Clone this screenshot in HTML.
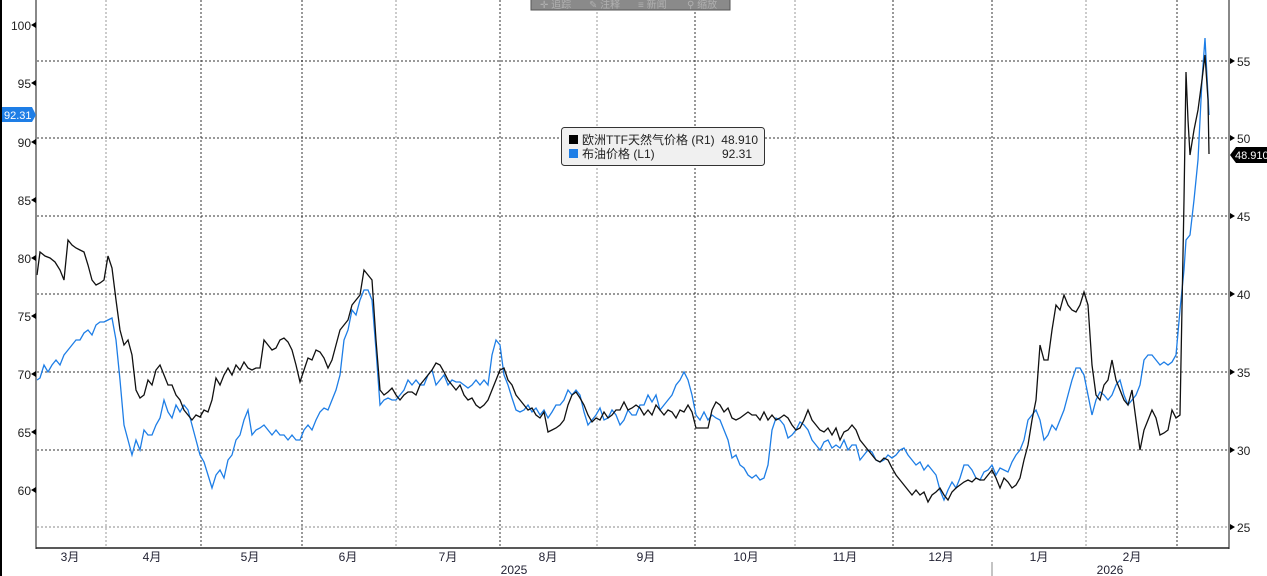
<!DOCTYPE html>
<html><head><meta charset="utf-8"><style>
html,body{margin:0;padding:0;background:#fff;width:1267px;height:576px;overflow:hidden}
svg{display:block;font-family:"Liberation Sans","Noto Sans CJK SC",sans-serif}
</style></head><body>
<svg width="1267" height="576" viewBox="0 0 1267 576">
<rect x="0" y="0" width="1267" height="576" fill="#fff"/>
<rect x="0" y="0" width="2" height="576" fill="#000"/>
<g stroke="#333" stroke-width="1" stroke-dasharray="2,2">
<line x1="37" y1="61" x2="1228" y2="61"/><line x1="37" y1="138" x2="1228" y2="138"/>
<line x1="37" y1="216" x2="1228" y2="216"/><line x1="37" y1="294" x2="1228" y2="294"/>
<line x1="37" y1="372" x2="1228" y2="372"/><line x1="37" y1="450" x2="1228" y2="450"/>
<line x1="37" y1="527" x2="1228" y2="527" stroke="#888"/>
</g>
<g stroke="#999" stroke-width="1" stroke-dasharray="2,2">
<line x1="106" y1="0" x2="106" y2="548"/><line x1="201" y1="0" x2="201" y2="548" stroke="#333"/>
<line x1="302" y1="0" x2="302" y2="548" stroke="#333"/><line x1="396" y1="0" x2="396" y2="548"/>
<line x1="500" y1="0" x2="500" y2="548" stroke="#333"/><line x1="597" y1="0" x2="597" y2="548"/>
<line x1="695" y1="0" x2="695" y2="548" stroke="#333"/><line x1="795" y1="0" x2="795" y2="548"/>
<line x1="893" y1="0" x2="893" y2="548" stroke="#333"/><line x1="992" y1="0" x2="992" y2="548" stroke="#333"/>
<line x1="1086" y1="0" x2="1086" y2="548"/><line x1="1177" y1="0" x2="1177" y2="548" stroke="#333"/>
</g>
<line x1="36" y1="0" x2="36" y2="549" stroke="#888" stroke-width="2"/>
<line x1="1229" y1="0" x2="1229" y2="549" stroke="#888" stroke-width="2"/>
<line x1="36" y1="548" x2="1229" y2="548" stroke="#222" stroke-width="1.5"/>
<line x1="992" y1="562" x2="992" y2="576" stroke="#888"/>
<g font-size="12" fill="#222" text-anchor="end">
<text x="31" y="30">100</text><text x="31" y="88">95</text><text x="31" y="147">90</text>
<text x="31" y="205">85</text><text x="31" y="263">80</text><text x="31" y="321">75</text>
<text x="31" y="379">70</text><text x="31" y="437">65</text><text x="31" y="495">60</text>
</g>
<g font-size="12" fill="#222">
<text x="1237" y="66">55</text><text x="1237" y="143">50</text><text x="1237" y="221">45</text>
<text x="1237" y="299">40</text><text x="1237" y="377">35</text><text x="1237" y="455">30</text>
<text x="1237" y="532">25</text>
</g>
<g font-size="12" fill="#223" text-anchor="middle">
<text x="70" y="561">3月</text><text x="152" y="561">4月</text><text x="250" y="561">5月</text>
<text x="348" y="561">6月</text><text x="448" y="561">7月</text><text x="548" y="561">8月</text>
<text x="646" y="561">9月</text><text x="746" y="561">10月</text><text x="845" y="561">11月</text>
<text x="941" y="561">12月</text><text x="1039" y="561">1月</text><text x="1132" y="561">2月</text>
<text x="514" y="574">2025</text><text x="1110" y="574">2026</text>
</g>
<polyline fill="none" stroke="#1e7ee6" stroke-width="1.3" points="37,380 40,378 44,365 48,372 52,365 56,360 60,365 64,355 68,350 72,345 76,340 80,340 84,333 88,330 92,335 96,325 100,322 104,322 108,320 112,318 116,340 120,380 124,425 128,440 132,455 136,440 140,450 144,430 148,435 152,435 156,425 160,418 164,400 168,412 172,418 176,405 180,412 184,405 188,410 192,425 196,440 200,455 204,462 208,475 212,488 216,475 220,470 224,478 228,460 232,455 236,440 240,435 244,420 248,410 252,435 256,430 260,428 264,425 268,430 272,435 276,430 280,435 284,435 288,440 292,435 296,440 300,440 304,430 308,425 312,430 316,420 320,412 324,408 328,410 332,400 336,390 340,375 344,340 348,330 352,310 356,315 360,300 364,290 368,290 372,300 376,350 380,405 384,400 388,398 392,400 396,400 400,395 404,390 408,380 412,385 416,380 420,385 424,385 428,375 432,370 436,385 440,380 444,375 448,385 452,380 456,382 460,382 464,385 468,388 472,385 476,380 480,385 484,380 488,385 492,355 496,340 500,345 504,375 508,385 512,398 516,410 520,412 524,410 528,405 532,412 536,408 540,415 544,410 548,418 552,412 556,405 560,405 564,400 568,390 572,395 576,390 580,395 584,412 588,425 592,420 596,415 600,408 604,420 608,418 612,410 616,415 620,425 624,420 628,410 632,415 636,415 640,405 644,405 648,395 652,402 656,395 660,410 664,405 668,400 672,395 676,385 680,380 684,372 688,380 692,395 696,415 700,420 704,412 708,420 712,415 716,418 720,420 724,430 728,440 732,458 736,455 740,465 744,468 748,475 752,478 756,475 760,480 764,478 768,465 772,430 776,418 780,420 784,425 788,438 792,435 796,430 800,422 804,425 808,430 812,440 816,445 820,450 824,442 828,440 832,448 836,445 840,448 844,440 848,450 852,445 856,445 860,460 864,455 868,450 872,452 876,460 880,462 884,460 888,455 892,458 896,455 900,450 904,448 908,455 912,460 916,465 920,462 924,470 928,465 932,470 936,475 940,490 944,500 948,490 952,482 956,488 960,478 964,465 968,465 972,470 976,478 980,480 984,472 988,470 992,465 996,475 1000,468 1004,470 1008,472 1012,462 1016,455 1020,450 1024,440 1028,420 1032,415 1036,410 1040,420 1044,440 1048,435 1052,425 1056,430 1060,420 1064,410 1068,395 1072,380 1076,368 1080,368 1084,375 1088,395 1092,415 1096,400 1100,392 1104,395 1108,400 1112,395 1116,385 1120,380 1124,395 1128,405 1132,400 1136,395 1140,385 1144,360 1148,355 1152,355 1156,360 1160,365 1164,362 1168,365 1172,362 1176,355 1180,310 1184,270 1186,240 1190,235 1194,200 1198,160 1202,80 1205,38 1209,115"/>
<polyline fill="none" stroke="#111" stroke-width="1.3" points="37,275 40,252 45,256 50,258 55,262 60,270 64,280 68,240 72,245 76,248 80,250 84,252 88,265 92,280 96,285 100,283 104,280 108,256 112,268 116,300 120,330 124,345 128,340 132,355 136,390 140,398 144,395 148,380 152,385 156,370 160,365 164,375 168,385 172,385 176,395 180,400 184,410 188,415 192,420 196,415 200,417 204,410 208,412 212,400 216,378 220,385 224,375 228,368 232,375 236,365 240,370 244,362 248,368 252,370 256,368 260,368 264,340 268,345 272,350 276,348 280,340 284,338 288,342 292,350 296,365 300,382 304,370 308,358 312,360 316,350 320,352 324,358 328,368 332,360 336,345 340,330 344,325 348,320 352,305 356,300 360,295 364,270 368,275 372,280 376,340 380,390 384,395 388,392 392,388 396,395 400,400 404,395 408,392 412,392 416,395 420,385 424,380 428,375 432,370 436,363 440,365 444,372 448,380 452,385 456,390 460,385 464,395 468,400 472,398 476,405 480,408 484,405 488,400 492,390 496,380 500,370 504,368 508,380 512,385 516,395 520,400 524,405 528,410 532,408 536,415 540,418 544,412 548,432 552,430 556,428 560,425 564,420 568,405 572,395 576,392 580,398 584,405 588,415 592,422 596,418 600,420 604,412 608,418 612,415 616,410 620,410 624,402 628,410 632,408 636,405 640,408 644,415 648,410 652,415 656,405 660,410 664,415 668,410 672,412 676,418 680,410 684,412 688,405 692,412 696,428 700,428 704,428 708,428 712,410 716,402 720,405 724,412 728,408 732,418 736,420 740,418 744,415 748,412 752,415 756,415 760,420 764,412 768,420 772,415 776,420 780,418 784,415 788,418 792,425 796,430 800,428 804,420 808,410 812,420 816,425 820,430 824,432 828,428 832,435 836,428 840,440 844,432 848,430 852,425 856,430 860,440 864,445 868,450 872,455 876,460 880,462 884,458 888,460 892,468 896,475 900,480 904,485 908,490 912,495 916,490 920,495 924,492 928,502 932,495 936,492 940,488 944,495 948,500 952,492 956,488 960,485 964,482 968,480 972,482 976,478 980,480 984,480 988,475 992,470 996,478 1000,488 1004,478 1008,482 1012,488 1016,485 1020,478 1024,460 1028,445 1032,420 1036,400 1040,345 1044,360 1048,360 1052,330 1056,305 1060,310 1064,295 1068,305 1072,310 1076,312 1080,305 1084,292 1088,305 1092,365 1096,395 1100,400 1104,385 1108,380 1112,360 1116,380 1120,390 1124,400 1128,405 1132,390 1136,420 1140,450 1144,430 1148,420 1152,410 1156,418 1160,435 1164,433 1168,430 1172,410 1176,418 1180,415 1184,200 1186,72 1188,120 1190,155 1194,130 1198,110 1202,80 1205,55 1208,100 1209,154"/>
<rect x="531" y="-2" width="199" height="12" fill="#8a8a8a" stroke="#555"/>
<g font-size="10" fill="#b0b0b0"><text x="540" y="8">✛ 追踪</text><text x="589" y="8">✎ 注释</text><text x="638" y="8">≡ 新闻</text><text x="687" y="8">⚲ 缩放</text></g>
<rect x="561.5" y="127.5" width="203" height="38" rx="3" fill="#f0f0f0" stroke="#333"/>
<rect x="569" y="135" width="9" height="9" fill="#000"/>
<rect x="569" y="149" width="9" height="9" fill="#1e7ee6"/>
<g font-size="12" fill="#222"><text x="582" y="144">欧洲TTF天然气价格 (R1)</text><text x="582" y="158">布油价格 (L1)</text>
<text x="758" y="144" text-anchor="end">48.910</text><text x="752" y="158" text-anchor="end">92.31</text></g>
<path d="M2,107 H32 L36,115 L32,122 H2 Z" fill="#1e7ee6"/>
<text x="4" y="119" font-size="11" fill="#fff">92.31</text>
<path d="M1236,147 H1267 V163 H1236 L1230,155 Z" fill="#000"/>
<text x="1235" y="159" font-size="11" fill="#fff">48.910</text>
<g fill="#000"><path d="M31,25 l5,-3 v6z"/><path d="M31,83 l5,-3 v6z"/><path d="M31,142 l5,-3 v6z"/><path d="M31,200 l5,-3 v6z"/><path d="M31,258 l5,-3 v6z"/><path d="M31,316 l5,-3 v6z"/><path d="M31,374 l5,-3 v6z"/><path d="M31,432 l5,-3 v6z"/><path d="M31,490 l5,-3 v6z"/>
<path d="M1235,61 l-5,-3 v6z"/><path d="M1235,138 l-5,-3 v6z"/><path d="M1235,216 l-5,-3 v6z"/><path d="M1235,294 l-5,-3 v6z"/><path d="M1235,372 l-5,-3 v6z"/><path d="M1235,450 l-5,-3 v6z"/><path d="M1235,527 l-5,-3 v6z"/></g>
</svg>
</body></html>
